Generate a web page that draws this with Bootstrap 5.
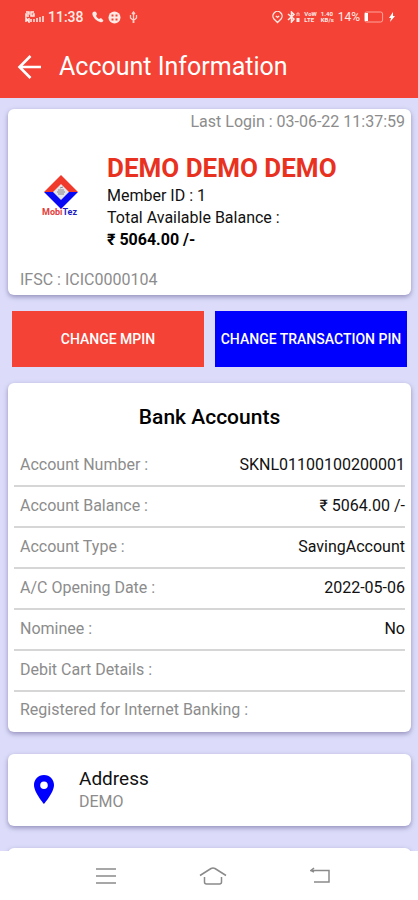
<!DOCTYPE html>
<html lang="en">
<head>
<meta charset="utf-8">
<meta name="viewport" content="width=device-width, initial-scale=1">
<title>Account Information</title>
<link href="https://cdn.jsdelivr.net/npm/bootstrap@5.3.0/dist/css/bootstrap.min.css" rel="stylesheet">
<style>
body{font-family:Roboto,"Noto Sans",sans-serif;font-size:16px;line-height:22px;color:#111;background:#dcdcfa}
.app-top{background:#f44336;color:#fff;height:98px}
.status-bar{height:34px;padding:0 22px 0 25px;font-size:12px;line-height:16px;color:#ffeae6}
.status-bar .clock{font-size:14px;font-weight:500}
.tiny-stack{font-size:6px;line-height:6px;font-weight:700}
.title-bar{height:66px;padding:0 17px;gap:16px}
.title-bar h1{font-size:25px;line-height:32px;font-weight:400}
.content-area{padding:11px 7px 0 8px}
.panel{background:#fff;border-radius:6px;box-shadow:0 2px 5px rgba(60,50,110,.45)}
.soft-text{color:#8c8c8c}
.profile-panel{height:186px;padding:2px 6px 4px 12px}
.profile-logo{width:38px;margin:0 27px 10px 22px}
.holder{color:#e8321f;font-size:26px;line-height:34px;font-weight:700}
.actions{gap:11px;padding:16px 4px}
.actions .btn{height:56px;border-radius:0;font-size:14px;line-height:20px;font-weight:500;color:#fff;padding:0;flex:1 1 0}
.btn-mpin,.btn-mpin:hover{background:#f44336}
.btn-tpin,.btn-tpin:hover{background:#00f}
.panel h2{font-size:21px;line-height:28px;font-weight:500;padding:20px 0 15px;color:#000}
.rows{padding:0 6px}
.rows .entry{height:41px;padding:0 0 2px 6px;border-bottom:2px solid #d6d6d6}
.rows .entry:last-child{height:40px;padding-bottom:4px;border-bottom:0}
.address-panel{height:72px;margin-top:22px;padding:0 24px;gap:23px}
.address-panel h3{font-size:19px;line-height:24px;font-weight:400}
.next-panel{height:72px;margin-top:22px}
.system-nav{height:49px;background:#fff;padding:0 45px 0 52px}
.system-nav .btn{line-height:0}
</style>
<script src="https://cdn.jsdelivr.net/npm/bootstrap@5.3.0/dist/js/bootstrap.bundle.min.js"></script>
</head>
<body>
<div class="d-flex flex-column vh-100 overflow-hidden">
<header class="app-top flex-shrink-0">
  <div class="status-bar d-flex align-items-center justify-content-between">
    <div class="d-flex align-items-center">
      <svg class="me-1" width="19" height="12" viewBox="0 0 19 12" fill="none" stroke="#ffeae6" aria-hidden="true"><path d="M1 1h3v2H1v2h3M9 1H6v4h3V3H7.500M1 11V7l3 4V7M6 11V8M9 11V8M12 11V7M15 11V6M18 11V5" stroke-width="1.500"/></svg>
      <span class="clock">11:38</span>
      <svg class="ms-2" width="12" height="12" viewBox="0 0 12 12" aria-hidden="true"><path d="M1 1q2-1 3 0l1 2-1 2q1 2 3 3l2-1 2 2q1 1-1 2-3 1-7-3T1 1z" fill="#ffeae6"/></svg>
      <svg class="ms-1" width="13" height="13" viewBox="0 0 13 13" aria-hidden="true"><circle cx="6.500" cy="6.500" r="6" fill="#ffeae6"/><path d="M3.500 3.500h2v2h-2zM7.500 3.500h2v2h-2zM3.500 7.500h2v2h-2zM7.500 7.500h2v2h-2z" fill="#f44336"/></svg>
      <svg class="ms-2" width="9" height="13" viewBox="0 0 9 13" fill="none" stroke="#ffd0c9" aria-hidden="true"><path d="M4.500 1v11M3 3l1.500-2L6 3M1.500 4v3l3 2.500L7.500 7V4M3.500 11h2" stroke-width="1.300"/></svg>
    </div>
    <div class="d-flex align-items-center">
      <svg width="11" height="13" viewBox="0 0 11 13" fill="none" stroke="#ffeae6" aria-hidden="true"><path d="M5.500 11.500 2 8a4.600 4.600 0 1 1 7 0z" stroke-width="1.300"/><path d="m3.800 4.800 1.700 1.700 1.700-1.700" stroke-width="1.200"/></svg>
      <svg class="ms-1" width="13" height="12" viewBox="0 0 13 12" fill="none" stroke="#ffeae6" aria-hidden="true"><path d="m1 3 6 5-2.500 3V1L7 3.500 1 9" stroke-width="1.500"/><path d="M9.500 7h3v4h-3z" fill="#ffeae6" stroke="none"/><path d="M10 5V2h2v3" stroke-width=".7"/></svg>
      <span class="tiny-stack ms-1">VoW<br>LTE</span>
      <span class="tiny-stack ms-1">1.40<br>KB/s</span>
      <span class="ms-1">14%</span>
      <svg class="ms-1" width="20" height="12" viewBox="0 0 20 12" aria-hidden="true"><rect x=".6" y="1" width="18" height="10" rx="2" fill="none" stroke="#ffa39a"/><path d="M1 2h3v8H1z" fill="#fff"/></svg>
      <svg class="ms-1" width="8" height="12" viewBox="0 0 8 12" aria-hidden="true"><path d="M5 1 1 7h2L2 11l5-6H5z" fill="#fff"/></svg>
    </div>
  </div>
  <div class="title-bar d-flex align-items-center">
    <button class="btn p-0 border-0 lh-1" type="button" aria-label="Back"><svg width="26" height="26" viewBox="0 0 26 26" fill="none" stroke="#fff" stroke-width="2.600"><path d="M24 13H3M13.500 2 2.500 13l11 11"/></svg></button>
    <h1 class="m-0">Account Information</h1>
  </div>
</header>

<main class="content-area flex-fill overflow-hidden">
  <section class="panel profile-panel d-flex flex-column">
    <div class="soft-text text-end">Last Login : 03-06-22 11:37:59</div>
    <div class="d-flex flex-fill align-items-center">
      <svg class="profile-logo flex-shrink-0" viewBox="0 0 38 42" role="img" aria-label="MobiTez">
        <path d="M19 0 36 17H2z" fill="#f03a2b"/><path d="M2 17h34L19 34z" fill="#0808f5"/>
        <path d="m19 9 8 8-8 8-8-8z" fill="#e4e4ec"/><path d="M16 15h6M15 17h8M16 19h6M18 13l3-1" stroke="#888" stroke-width="1"/>
        <text x="0" y="40" font-size="9" font-weight="700" fill="#e43d3d" font-family="Roboto,sans-serif">Mobi<tspan fill="#1d1dc4">Tez</tspan></text>
      </svg>
      <div>
        <div class="holder">DEMO DEMO DEMO</div>
        <div>Member ID : 1</div>
        <div>Total Available Balance :</div>
        <div class="fw-bold text-black">₹ 5064.00 /-</div>
      </div>
    </div>
    <div class="soft-text">IFSC : ICIC0000104</div>
  </section>

  <div class="actions d-flex">
    <button class="btn btn-mpin border-0 text-nowrap" type="button">CHANGE MPIN</button>
    <button class="btn btn-tpin border-0 text-nowrap" type="button">CHANGE TRANSACTION PIN</button>
  </div>

  <section class="panel">
    <h2 class="m-0 text-center">Bank Accounts</h2>
    <dl class="rows m-0">
      <div class="entry d-flex align-items-center justify-content-between"><dt class="soft-text fw-normal">Account Number :</dt><dd class="m-0">SKNL01100100200001</dd></div>
      <div class="entry d-flex align-items-center justify-content-between"><dt class="soft-text fw-normal">Account Balance :</dt><dd class="m-0">₹ 5064.00 /-</dd></div>
      <div class="entry d-flex align-items-center justify-content-between"><dt class="soft-text fw-normal">Account Type :</dt><dd class="m-0">SavingAccount</dd></div>
      <div class="entry d-flex align-items-center justify-content-between"><dt class="soft-text fw-normal">A/C Opening Date :</dt><dd class="m-0">2022-05-06</dd></div>
      <div class="entry d-flex align-items-center justify-content-between"><dt class="soft-text fw-normal">Nominee :</dt><dd class="m-0">No</dd></div>
      <div class="entry d-flex align-items-center justify-content-between"><dt class="soft-text fw-normal">Debit Cart Details :</dt><dd class="m-0"></dd></div>
      <div class="entry d-flex align-items-center justify-content-between"><dt class="soft-text fw-normal">Registered for Internet Banking :</dt><dd class="m-0"></dd></div>
    </dl>
  </section>

  <section class="panel address-panel d-flex align-items-center">
    <svg width="24" height="30" viewBox="0 0 24 30" aria-hidden="true"><path fill="#00f" fill-rule="evenodd" d="M12 0C6 0 2 4.600 2 10c0 7.500 10 19 10 19s10-11.500 10-19C22 4.600 18 0 12 0zm0 6.500a3.800 3.800 0 1 1 0 7.600 3.800 3.800 0 0 1 0-7.600z"/></svg>
    <div>
      <h3 class="m-0">Address</h3>
      <div class="soft-text">DEMO</div>
    </div>
  </section>
  <section class="panel next-panel" aria-hidden="true"></section>
</main>

<nav class="system-nav flex-shrink-0" aria-label="System">
  <div class="row g-0 h-100 align-items-center text-center">
    <div class="col"><button class="btn p-0 border-0" type="button" aria-label="Recent apps"><svg width="20" height="18" viewBox="0 0 20 18" stroke="#8a8a8a" stroke-width="1.500"><path d="M0 2h20M0 9h20M0 16h20"/></svg></button></div>
    <div class="col"><button class="btn p-0 border-0" type="button" aria-label="Home"><svg width="28" height="20" viewBox="0 0 28 20" fill="none" stroke="#8a8a8a" stroke-width="1.500"><path d="M1 9.500 12 2.500q2-1 4 0l11 7M5.500 11v5q0 2 2 2h13q2 0 2-2v-5"/></svg></button></div>
    <div class="col"><button class="btn p-0 border-0" type="button" aria-label="Back"><svg width="20" height="18" viewBox="0 0 20 18" fill="none" stroke="#8a8a8a" stroke-width="1.500"><path d="M4 1 1 3.500h18V15H4M1 3.500l3 1.500"/></svg></button></div>
  </div>
</nav>
</div>
</body>
</html>
